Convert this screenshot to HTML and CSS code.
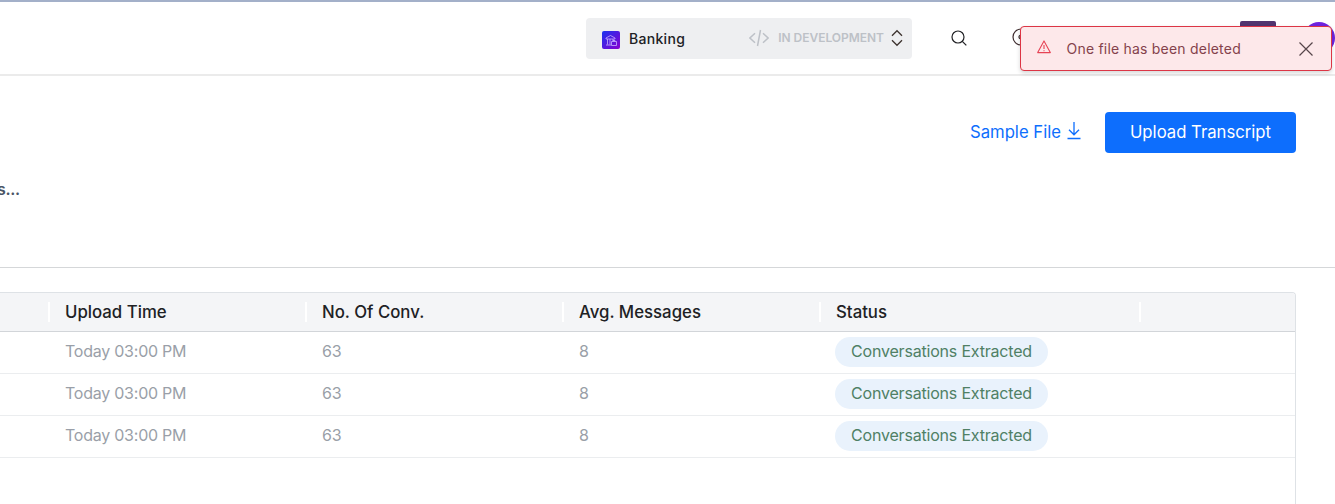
FILE: index.html
```html
<!DOCTYPE html>
<html lang="en">
<head>
<meta charset="utf-8">
<title>Transcripts</title>
<link rel="stylesheet" href="styles.css">
</head>
<body>
<header class="topbar">
  <div class="app-select">
    <svg class="app-logo" width="18" height="18" viewBox="0 0 18 18" fill="none">
      <defs><linearGradient id="logo" x1="0" y1="0" x2="1" y2="1"><stop stop-color="#1b35ef"/><stop offset="1" stop-color="#8a00d0"/></linearGradient></defs>
      <rect width="18" height="18" rx="2" fill="url(#logo)"/>
      <path d="M4 8V7l4.500-2.500L13 7v1H4M5.500 8v5.500M8 8v5.500M4 14h5M11 8v2M9.500 10.500h5v4h-5zM11 10.500V9.500h2v1" stroke="#c9b0ff" stroke-width=".8"/>
    </svg>
    <span class="app-name">Banking</span>
    <svg class="code" width="20" height="18" viewBox="0 0 20 18" fill="none" stroke="#bdc1c7" stroke-width="1.5"><path d="M6 4.200.900 9 6 13.800M14 4.200 19.100 9 14 13.800M11.500 1 8.500 17"/></svg>
    <span class="app-state">IN DEVELOPMENT</span>
    <svg class="chevrons" width="12" height="18" viewBox="0 0 12 18" fill="none" stroke="#3d332f" stroke-width="1.3"><path d="m1 6.700 5-5 5 5M1 11.300l5 5 5-5"/></svg>
  </div>
  <svg class="search" width="16" height="16" viewBox="0 0 16 16" fill="none" stroke="#202124" stroke-width="1.2"><circle cx="7" cy="7" r="6"/><path d="m11.300 11.300 4 4"/></svg>
  <svg class="help" width="18" height="18" viewBox="0 0 18 18" fill="none" stroke="#3d2a2c" stroke-width="1.2"><circle cx="9" cy="9" r="8"/><circle cx="9" cy="9" r="2"/></svg>
  <span class="tile"></span>
  <span class="avatar"></span>
</header>

<div class="toast" role="alert">
  <svg class="warn" width="14" height="14" viewBox="0 0 14 14" fill="none" stroke="#e64355" stroke-width="1.1" stroke-linejoin="round"><path d="M7 .9 13.300 12.600H.7z"/><path d="M7 5v4M7 10.300v1"/></svg>
  <span class="toast-text">One file has been deleted</span>
  <svg class="close" width="14" height="14" viewBox="0 0 14 14" stroke="#56454a" stroke-width="1.2"><path d="m.5.5 13 13M13.500.5l-13 13"/></svg>
</div>

<section class="intro">
  <div class="actions">
    <a class="sample"><span class="sample-text">Sample File</span>
      <svg width="14" height="18" viewBox="0 0 14 18" fill="none" stroke="#0d6efd" stroke-width="1.3"><path d="M7 0v12.500M2 7.800l5 5 5-5M.5 16.500h13"/></svg></a>
    <button class="upload"><span class="upload-text">Upload Transcript</span></button>
  </div>
  <p class="summary">s...</p>
</section>

<main class="table">
  <div class="row head"><div></div><div>Upload Time</div><div>No. Of Conv.</div><div>Avg. Messages</div><div>Status</div><div></div></div>
  <div class="row"><div></div><div>Today 03:00 PM</div><div>63</div><div>8</div><div><span class="pill">Conversations Extracted</span></div><div></div></div>
  <div class="row"><div></div><div>Today 03:00 PM</div><div>63</div><div>8</div><div><span class="pill">Conversations Extracted</span></div><div></div></div>
  <div class="row"><div></div><div>Today 03:00 PM</div><div>63</div><div>8</div><div><span class="pill">Conversations Extracted</span></div><div></div></div>
</main>
</body>
</html>
```
FILE: styles.css
```css
* { box-sizing: border-box; }
body {
  margin: 0;
  height: 504px;
  overflow: hidden;
  display: flex;
  flex-direction: column;
  background: #fff;
  font: 16px/20px Inter, "Liberation Sans", sans-serif;
}
svg { display: block; flex: none; }
.topbar {
  flex: none;
  height: 76px;
  border-top: 2px solid #a3b0c9;
  border-bottom: 2px solid #ebebeb;
  padding: 16px 0 0 586px;
  display: flex;
  align-items: flex-start;
}
.app-select {
  flex: none;
  width: 326px;
  height: 41px;
  padding: 0 9px 2px 16px;
  border-radius: 4px;
  background: #eeeff1;
  display: flex;
  align-items: center;
}
.app-logo { margin-top: 5px; }
.app-name { margin: 3px auto 0 9px; font-size: 14px; font-weight: 500; color: #202124; letter-spacing: .3px; }
.app-state { margin: 0 7px 0 9px; font-size: 12px; font-weight: 600; color: #bdc1c7; letter-spacing: -.03px; }
.search { margin: 12px 0 0 39px; }
.help { margin: 10px 0 0 45px; }
.tile { flex: none; width: 36px; height: 36px; margin: 3px 0 0 210px; border-radius: 2px; background: #51356f; }
.avatar { flex: none; width: 32px; height: 32px; margin: 4px 0 0 27px; border-radius: 50%; background: #6e24e0; }
.toast {
  position: absolute;
  top: 26px;
  left: 1020px;
  width: 312px;
  height: 45px;
  padding: 0 18px 0 16px;
  border: 1px solid #dc3545;
  border-radius: 4px;
  background: #fde8ea;
  box-shadow: 0 2px 4px rgba(0, 0, 0, .16);
  display: flex;
  align-items: center;
}
.warn { margin-bottom: 4px; }
.toast-text { margin: 1px auto 0 15.5px; font-size: 14px; color: #84424c; letter-spacing: .21px; }
.intro {
  flex: none;
  height: 192px;
  border-bottom: 1px solid #d5d7d9;
  padding: 36px 39px 0 0;
}
.actions { display: flex; justify-content: flex-end; align-items: center; gap: 24px; font-size: 16.7px; }
.sample { display: flex; align-items: center; gap: 6px; color: #0d6efd; padding-bottom: 2px; }
.sample svg { margin-bottom: 2px; }
.upload {
  width: 191px;
  height: 41px;
  padding: 0 0 2px;
  border: 0;
  border-radius: 4px;
  background: #0d6efd;
  color: #fff;
  font: inherit;
}
.summary { margin: 26px 0 0 -3px; font-weight: 600; color: #495465; letter-spacing: -.3px; }
.table {
  flex: 1;
  width: 1296px;
  margin-top: 24px;
  border-top: 1px solid #dee2e6;
  border-right: 1px solid #dee2e6;
  border-top-right-radius: 4px;
  overflow: hidden;
}
.row {
  display: grid;
  grid-template-columns: 50px 257px 257px 256px 320px 1fr;
  height: 42px;
  border-bottom: 1px solid #ebedef;
  align-items: center;
  color: #9a9fa8;
  letter-spacing: -.24px;
}
.row > div { padding: 0 0 3px 15px; min-height: 20px; white-space: nowrap; }
.row > div:nth-child(5) { padding-bottom: 1px; }
.head {
  grid-template-columns: 50px 257px 257px 257px 320px 1fr;
  height: 39px;
  background: #f4f5f7;
  border-color: #d2d5d9;
  font-size: 16.8px;
  font-weight: 500;
  color: #202124;
  letter-spacing: 0;
}
.head > div, .head > div:nth-child(5) { height: 19px; padding-bottom: 0; line-height: 20px; border-right: 2px solid #fff; }
.head > div:last-child { border: 0; }
.pill {
  display: block;
  width: 213px;
  height: 30px;
  border-radius: 15px;
  background: #e9f2fc;
  color: #4f8065;
  line-height: 28px;
  letter-spacing: -.19px;
  text-align: center;
}
```
